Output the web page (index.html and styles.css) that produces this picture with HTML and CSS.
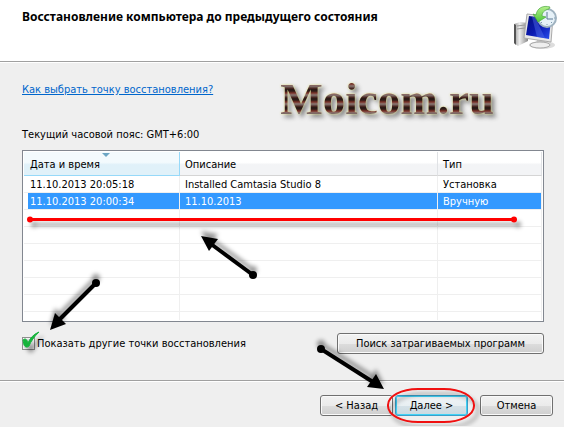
FILE: index.html
```html
<!DOCTYPE html>
<html lang="ru">
<head>
    <meta charset="UTF-8">
    <meta name="viewport" content="width=device-width, initial-scale=1.0">
    <title>Восстановление системы</title>
    <link rel="stylesheet" href="styles.css">
</head>
<body>
    <div class="wizard">
        <header class="header">
            <h1>Восстановление компьютера до предыдущего состояния</h1>
            <svg class="header-icon" width="44" height="46" viewBox="0 0 44 46" aria-hidden="true">
                <defs>
                    <linearGradient id="tower" x1="0" y1="0" x2="1" y2="0">
                        <stop offset="0" stop-color="#999"/>
                        <stop offset=".4" stop-color="#eee"/>
                        <stop offset="1" stop-color="#888"/>
                    </linearGradient>
                    <linearGradient id="screen" x1="0" y1="0" x2="1" y2="1">
                        <stop offset="0" stop-color="#06107c"/>
                        <stop offset=".5" stop-color="#0a18b0"/>
                        <stop offset="1" stop-color="#2a50ee"/>
                    </linearGradient>
                    <linearGradient id="back" x1="0" y1="0" x2="0" y2="1">
                        <stop offset="0" stop-color="#b4f08c"/>
                        <stop offset="1" stop-color="#4fc83a"/>
                    </linearGradient>
                </defs>
                <ellipse cx="29" cy="40" rx="13" ry="4" fill="#ddd"/>
                <path d="M1 19l6-2 8 1v18L5 41l-4-3z" fill="url(#tower)"/>
                <path d="M1 19l2 1v20l-2-2z" fill="#555"/>
                <path d="M4 21l8-1M4 24l8-1" stroke="#999" fill="none"/>
                <path d="M24 35l8 1 1 5H22z" fill="#c8c8c8"/>
                <ellipse cx="27" cy="40" rx="10" ry="3" fill="#eee" stroke="#aaa"/>
                <path d="M14 9l26 3-2 25-27-4z" fill="#e8e8e8" stroke="#aaa"/>
                <path d="M16 11l22 3-2 20-23-4z" fill="url(#screen)"/>
                <path d="M22 12l10 21-8-1-5-20z" fill="#5b78f0" opacity=".4"/>
                <circle cx="34" cy="13" r="9" fill="#e6f1f8" stroke="#9fb2c0" stroke-width="2"/>
                <path d="M34 7v7h6" fill="none" stroke="#5b7894"/>
                <path d="M34 20v-1M41 13h1M28 18l1-1M39 18l-1-1" stroke="#7d99b0"/>
                <path d="M37 2C30 0 24 3 23 10l-3-1 5 8 8-5-4-1c0-3 2-6 7-7z" fill="url(#back)" stroke="#49a83c" stroke-width=".7"/>
            </svg>
        </header>

        <main class="content">
            <div class="intro">
                <a class="help-link" href="#">Как выбрать точку восстановления?</a>
                <div class="watermark">Moicom.ru</div>
            </div>
            <p class="timezone">Текущий часовой пояс: GMT+6:00</p>

            <div class="list">
                <table>
                    <colgroup>
                        <col class="col-date">
                        <col>
                        <col class="col-type">
                    </colgroup>
                    <thead>
                        <tr>
                            <th class="sorted">Дата и время</th>
                            <th>Описание</th>
                            <th>Тип</th>
                        </tr>
                    </thead>
                    <tbody>
                        <tr><td>11.10.2013 20:05:18</td><td>Installed Camtasia Studio 8</td><td>Установка</td></tr>
                        <tr class="selected"><td>11.10.2013 20:00:34</td><td>11.10.2013</td><td>Вручную</td></tr>
                        <tr><td></td><td></td><td></td></tr>
                        <tr><td></td><td></td><td></td></tr>
                        <tr><td></td><td></td><td></td></tr>
                        <tr><td></td><td></td><td></td></tr>
                        <tr><td></td><td></td><td></td></tr>
                        <tr><td></td><td></td><td></td></tr>
                        <tr class="partial"><td></td><td></td><td></td></tr>
                    </tbody>
                </table>
            </div>

            <div class="options">
                <label class="check"><input type="checkbox" checked>Показать другие точки восстановления</label>
                <button type="button" class="btn btn-wide">Поиск затрагиваемых программ</button>
            </div>
        </main>

        <footer class="footer">
            <div class="nav">
                <button type="button" class="btn">&lt; Назад</button>
                <button type="button" class="btn btn-default">Далее &gt;</button>
            </div>
            <button type="button" class="btn">Отмена</button>
        </footer>

        <!-- Hand-drawn marks over the dialog -->
        <svg class="marks" width="564" height="427" viewBox="0 0 564 427" aria-hidden="true">
            <g class="mark-red">
                <path d="M30 219.500H514" stroke="#f00" stroke-width="3"/>
                <circle cx="30" cy="219.500" r="3" fill="#f00"/>
                <circle cx="514" cy="219.500" r="3" fill="#f00"/>
            </g>
            <g class="mark-up">
                <path d="M253 275L211 244" stroke="#000" stroke-width="4"/>
                <circle cx="253" cy="275" r="4"/>
                <path d="M201 236l17 3-9 12z"/>
                <path d="M96 283L60 319" stroke="#000" stroke-width="4"/>
                <circle cx="96" cy="283" r="4"/>
                <path d="M50 330l5-17 11 11z"/>
                <path d="M321 349L373 382" stroke="#000" stroke-width="4"/>
                <circle cx="321" cy="349" r="4"/>
                <path d="M384 389l-17-2 9-13z"/>
            </g>
            <g class="mark-red">
                <path d="M23 340c2-2 4-1 5 3 2-5 6-9 11-11-5 5-8 9-10 14-2 2-4 1-5-1z" fill="#17b33c" stroke="#17b33c"/>
                <rect x="388" y="389" width="86" height="33" rx="30" ry="16" fill="none" stroke="#f01010" stroke-width="2"/>
            </g>
        </svg>
    </div>
</body>
</html>
```
FILE: styles.css
```css
* {
    box-sizing: border-box;
}
body {
    margin: 0;
    background: #efefef;
    color: #000;
    font-family: Tahoma, "DejaVu Sans Condensed", "Noto Sans", sans-serif;
    font-size: 11px;
    line-height: 16px;
}
.wizard {
    position: relative;
}
.header {
    display: flex;
    justify-content: space-between;
    align-items: flex-start;
    padding: 5px 7px 11px 22px;
    background: #fff;
    border-bottom: 1px solid #fff;
    box-shadow: inset 0 -1px #a0a0a0;
}
h1 {
    margin: 4px 0;
    font-family: Tahoma, "Noto Sans", sans-serif;
    font-size: 12px;
    line-height: 16px;
}
.content {
    padding: 8px 20px 26px 22px;
}
.intro {
    display: flex;
    justify-content: space-between;
    align-items: flex-start;
    padding-right: 50px;
}
.help-link {
    margin-top: 11px;
    color: #0066cc;
}
.watermark {
    font-family: "Liberation Serif", serif;
    font-size: 45px;
    font-weight: bold;
    line-height: 56px;
    color: transparent;
    background: repeating-linear-gradient(#2b1a16 0 2px, #7d3228 4px, #8a7a76 6px, #3a1510 9px);
    -webkit-background-clip: text;
    background-clip: text;
    filter: drop-shadow(0 0 1px #e4e48c) drop-shadow(3px 3px 2px #888);
}
.timezone {
    margin: 0 0 7px;
}

/* Restore points list */
.list {
    padding: 1px;
    background: #fff;
    border: 1px solid #828790;
}
table {
    width: 100%;
    table-layout: fixed;
    border-collapse: separate;
    border-spacing: 0;
}
.col-date {
    width: 156px;
}
.col-type {
    width: 104px;
}
th {
    position: relative;
    height: 24px;
    padding: 2px 5px 0;
    font-weight: normal;
    text-align: left;
    background: linear-gradient(#fff 45%, #f3f4f6 55%);
    border-right: 1px solid #e0e2e5;
    border-bottom: 1px solid #d5d5d5;
}
th.sorted {
    background: linear-gradient(#f3fafd 45%, #e0f1f9 55%);
    border-color: #96d9f9;
}
th.sorted::after {
    content: "";
    position: absolute;
    top: 1px;
    left: 50%;
    border: 4px solid transparent;
    border-top-color: #6ca6c4;
    border-bottom: 0;
}
td {
    height: 17px;
    padding: 2px 5px 0;
    line-height: 14px;
    white-space: nowrap;
    border-right: 1px solid #efefef;
    border-bottom: 1px solid #efefef;
}
th:first-child,
td:first-child {
    padding-left: 6px;
}
.selected td {
    color: #fff;
    background: #3399ff;
}
.selected td:first-child {
    background: linear-gradient(90deg, #fff 4px, #3399ff 4px);
}
.partial td {
    height: 8px;
    border-bottom: 0;
}

.options {
    display: flex;
    justify-content: space-between;
    align-items: center;
    margin-top: 11px;
}
.check {
    display: flex;
    align-items: center;
    gap: 2px;
}
.check input {
    appearance: none;
    width: 13px;
    height: 13px;
    margin: 0;
    background: linear-gradient(135deg, #cbcfd5, #f6f6f6);
    border: 1px solid #8e8f8f;
    box-shadow: inset 0 0 0 1px #f4f4f4;
}
.btn {
    width: 73px;
    height: 21px;
    padding: 0;
    font: inherit;
    color: #000;
    background: linear-gradient(#f2f2f2, #ebebeb 50%, #dddddd 50%, #cfcfcf);
    border: 1px solid #707070;
    border-radius: 3px;
    box-shadow: inset 0 0 0 1px #fafafa;
}
.btn-wide {
    width: 207px;
}
.btn-default {
    background: linear-gradient(#f0f4f6, #e8eff2 50%, #d6e2e8 50%, #cad9e0);
    border-color: #3c9fc8;
    box-shadow: inset 0 0 0 1px #41d2f6;
}

.footer {
    display: flex;
    justify-content: flex-end;
    gap: 12px;
    padding: 14px 11px 10px;
    border-top: 1px solid #a0a0a0;
    box-shadow: inset 0 1px #fff;
}
.nav {
    display: flex;
    gap: 2px;
}

.marks {
    position: absolute;
    top: 0;
    left: 0;
    pointer-events: none;
}
.mark-red {
    filter: drop-shadow(4px 5px 2px #0006);
}
.mark-up {
    filter: drop-shadow(0 -5px 2px #0006);
}
```
